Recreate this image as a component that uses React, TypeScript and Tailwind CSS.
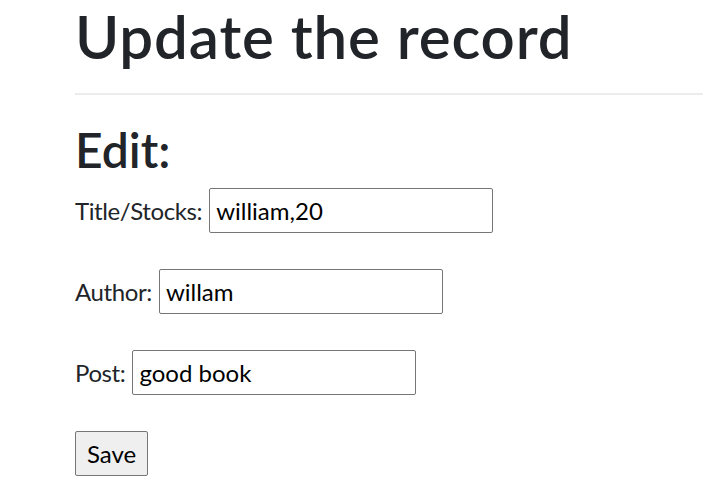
const FONT = { fontFamily: 'Lato, "Open Sans", "Liberation Sans", sans-serif' }

const FIELDS = [
  { label: 'Title/Stocks:', value: 'william,20' },
  { label: 'Author:', value: 'willam' },
  { label: 'Post:', value: 'good book' },
]

export default function App() {
  return (
    <div className="min-h-screen bg-white text-[#212529] pl-[75px]" style={FONT}>
      <h1 className="text-[60px] font-semibold leading-[72px] tracking-[0.9px]">Update the record</h1>
      <hr className="mt-[21px] border-0 border-t-[2px] border-[#ececec]" />

      <h2 className="mt-[26px] text-[48px] font-semibold leading-[57px]">Edit:</h2>

      <form className="mt-[10px] flex flex-col gap-[36px]">
        {FIELDS.map(({ label, value }) => (
          <div key={label} className="flex items-center gap-[7px] h-[45px]">
            <label className="text-[24px] leading-[36px] tracking-[-0.4px]">{label}</label>
            <input
              defaultValue={value}
              className="w-[284px] h-[45px] px-[6px] text-[24px] text-black border border-[#767676] rounded-[2px] outline-none"
              style={FONT}
            />
          </div>
        ))}
        <div>
          <button
            type="button"
            className="w-[73px] h-[45px] text-[24px] text-black bg-[#efefef] border border-[#767676] rounded-[2px]"
          >
            Save
          </button>
        </div>
      </form>
    </div>
  )
}
